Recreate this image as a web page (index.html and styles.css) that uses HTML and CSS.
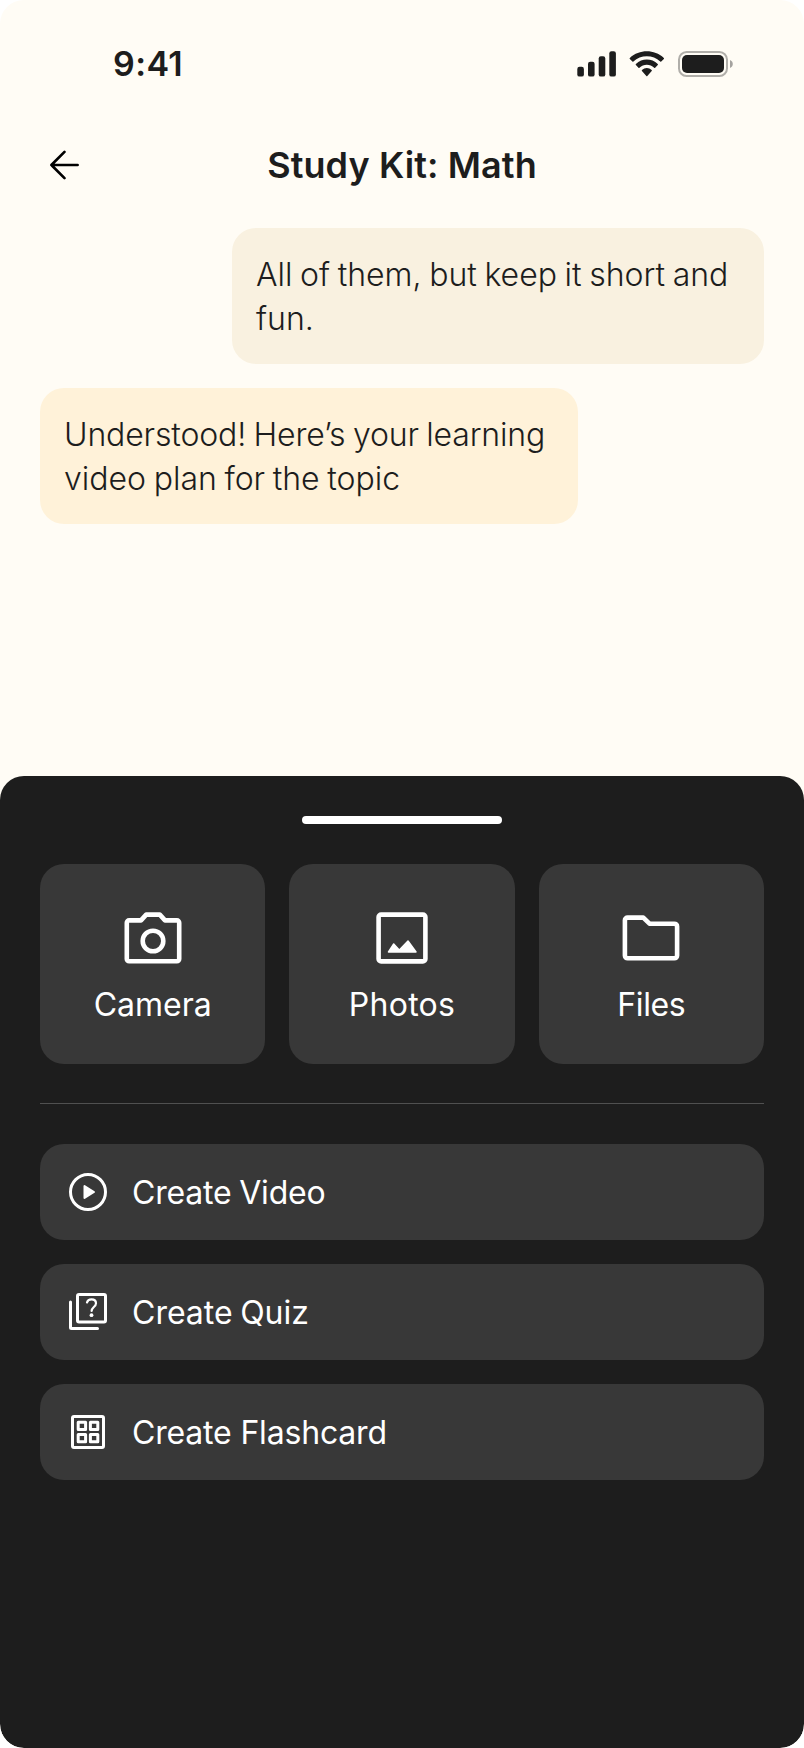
FILE: index.html
```
<!DOCTYPE html>
<html lang="en">
<head>
<meta charset="utf-8">
<title>Study Kit: Math</title>
<link rel="stylesheet" href="styles.css">
</head>
<body>
<div class="screen">
  <header class="status">
    <span class="clock">9:41</span>
    <svg class="indicators" width="158" height="28" viewBox="0 0 158 28" fill="#1d1d1d">
      <rect x="1.3" y="16.8" width="6.6" height="9.8" rx="2.2"/>
      <rect x="12" y="11.8" width="6.6" height="14.8" rx="2.2"/>
      <rect x="22.7" y="6.3" width="6.6" height="20.3" rx="2.2"/>
      <rect x="33.3" y="1.2" width="6.6" height="25.4" rx="2.2"/>
      <path transform="translate(53.6 1.2) scale(2.01 2.04)" d="M8.5713 2.46628C11.0584 2.46639 13.4504 3.38847 15.2529 5.04195C15.3887 5.1696 15.6056 5.16799 15.7393 5.03834L17.0368 3.77487C17.1045 3.70911 17.1422 3.62004 17.1417 3.52735C17.1411 3.43467 17.1023 3.34603 17.0338 3.28104C12.3028-1.09368 4.83907-1.09368.108056 3.28104C.03952 3.34598.00064 3.4346 0 3.52728C-.00062 3.61996.03705 3.70906.10469 3.77487L1.40255 5.03834C1.53615 5.16819 1.75327 5.1698 1.88893 5.04195C3.69167 3.38836 6.08395 2.46628 8.5713 2.46628ZM8.56795 6.68656C9.92527 6.68647 11.2341 7.19821 12.2403 8.12234C12.3763 8.25347 12.5907 8.25062 12.7234 8.11594L14.0106 6.79693C14.0784 6.72722 14.116 6.63302 14.1149 6.53514C14.1137 6.43677 14.0746 6.34327 14.0054 6.27555C10.9416 3.38615 6.19688 3.38615 3.13305 6.27555C3.06384 6.34327 3.02464 6.43682 3.02351 6.53518C3.02238 6.63354 3.06004 6.72722 3.12801 6.79693L4.4149 8.11594C4.54754 8.25062 4.76202 8.25347 4.89792 8.12234C5.90339 7.19882 7.21123 6.68713 8.56795 6.68656ZM11.0924 9.48011C11.0943 9.58546 11.0572 9.68703 10.9899 9.76084L8.81327 12.2156C8.74946 12.2877 8.66247 12.3283 8.5717 12.3283C8.48093 12.3283 8.39394 12.2877 8.33013 12.2156L6.15314 9.76084C6.08585 9.68697 6.04886 9.58537 6.05085 9.48002C6.05284 9.37467 6.09365 9.27491 6.16364 9.20429C7.55374 7.8904 9.58966 7.8904 10.9798 9.20429C11.0497 9.27497 11.0904 9.37476 11.0924 9.48011Z"/>
      <rect x="103" y="2" width="48" height="24" rx="7.6" fill="none" stroke="#1d1d1d" stroke-opacity=".35" stroke-width="2"/>
      <rect x="106" y="5" width="42" height="18" rx="5"/>
      <path d="M154 10v8c1.700-.7 2.800-2.200 2.800-4s-1.100-3.300-2.800-4z" fill-opacity=".4"/>
    </svg>
  </header>

  <nav class="topbar">
    <svg class="back" width="48" height="48" viewBox="0 0 48 48" fill="none" stroke="#000" stroke-width="2.7" stroke-linecap="round" stroke-linejoin="round">
      <path d="M37.600 24H11.400M24.500 10.900L11.400 24l13.100 13.100"/>
    </svg>
    <h1 class="title">Study Kit: Math</h1>
  </nav>

  <main class="chat">
    <p class="bubble sent">All of them, but keep it short and<br>fun.</p>
    <p class="bubble received"><span class="greeting">Understood! Here’s your learning</span><br>video plan for the topic</p>
  </main>

  <section class="sheet">
    <div class="handle"></div>
    <div class="tiles">
      <div class="tile">
        <svg width="72" height="72" viewBox="0 0 72 72" fill="none" stroke="#fff" stroke-width="4.600" stroke-linejoin="round">
          <path d="M12.100 18.400H24l5.200-5.800h13.600l5.200 5.800h11.900a2.300 2.300 0 0 1 2.300 2.300V57a2.300 2.300 0 0 1-2.300 2.300H12.100A2.300 2.300 0 0 1 9.800 57V20.700a2.300 2.300 0 0 1 2.300-2.300z"/>
          <circle cx="36" cy="39" r="10.300"/>
        </svg>
        <span class="label">Camera</span>
      </div>
      <div class="tile">
        <svg width="72" height="72" viewBox="0 0 72 72" fill="none" stroke="#fff" stroke-width="4.600">
          <rect x="12.600" y="12.600" width="46.800" height="46.800" rx="2.500"/>
          <path d="M22.500 50l5.200-8 5.300 5.800.6 0L42 39l8 11z" fill="#fff" stroke-width="1.500" stroke-linejoin="round"/>
        </svg>
        <span class="label photos">Photos</span>
      </div>
      <div class="tile">
        <svg width="72" height="72" viewBox="0 0 72 72" fill="none" stroke="#fff" stroke-width="4.600" stroke-linejoin="round">
          <path d="M12.600 15.600H28.300l6.200 6.100H59.400a2.700 2.700 0 0 1 2.700 2.700V53.600a2.700 2.700 0 0 1-2.700 2.700H12.600a2.700 2.700 0 0 1-2.700-2.700V18.300a2.700 2.700 0 0 1 2.700-2.700z"/>
        </svg>
        <span class="label files">Files</span>
      </div>
    </div>
    <hr class="divider">
    <div class="actions">
      <div class="action">
        <svg width="48" height="48" viewBox="0 0 48 48" fill="none" stroke="#fff" stroke-width="3">
          <circle cx="24" cy="24" r="17.500"/>
          <path d="M20.500 18v12l9.500-6z" fill="#fff" stroke-width="2" stroke-linejoin="round"/>
        </svg>
        <span class="name video">Create Video</span>
      </div>
      <div class="action">
        <svg width="48" height="48" viewBox="0 0 48 48" fill="none" stroke="#fff" stroke-width="3" stroke-linecap="round" stroke-linejoin="round">
          <rect x="13.500" y="6.500" width="28" height="27.500" rx="1.500"/>
          <path d="M6.500 14V39.500a1 1 0 0 0 1 1H33.500"/>
          <path d="M23 14.500c.5-2 2.200-3.200 4.500-3.200 2.600 0 4.500 1.600 4.500 4 0 3.600-4.400 3.900-4.400 7.700" stroke-width="2.200"/>
          <circle cx="27.500" cy="27.200" r="1.900" fill="#fff" stroke="none"/>
        </svg>
        <span class="name quiz">Create Quiz</span>
      </div>
      <div class="action">
        <svg width="48" height="48" viewBox="0 0 48 48" fill="none" stroke="#fff" stroke-width="3" stroke-linejoin="round">
          <rect x="8.500" y="8.500" width="31" height="31" rx="1.500"/>
          <path d="M14.200 14.200h7.400v7.400h-7.400zM26.400 14.200h7.400v7.400h-7.400zM14.200 26.400h7.400v7.400h-7.400zM26.400 26.400h7.400v7.400h-7.400z" stroke-width="3"/>
        </svg>
        <span class="name flashcard">Create Flashcard</span>
      </div>
    </div>
  </section>
</div>
</body>
</html>
```
FILE: styles.css
```
* { box-sizing: border-box; }
body { margin: 0; background: #fff; font-family: Inter, "Liberation Sans", sans-serif; color: #1d1d1d; }
svg { display: block; flex: none; }
.screen { width: 804px; height: 1748px; display: flex; flex-direction: column; background: #fffcf5; border-radius: 24px; overflow: hidden; }
.status { flex: none; display: flex; justify-content: space-between; align-items: center; height: 128px; padding: 0 70px 0 113px; }
.clock { font-size: 34px; font-weight: 600; line-height: 44px; letter-spacing: .4px; }
.topbar { flex: none; display: flex; align-items: center; height: 74px; padding: 0 40px; }
.title { flex: 1; margin: 0 48px 0 0; text-align: center; font-size: 36px; line-height: 48px; font-weight: 600; letter-spacing: .1px; white-space: nowrap; }
.chat { flex: none; display: flex; flex-direction: column; gap: 24px; padding: 26px 40px 0; height: 574px; }
.bubble { margin: 0; padding: 25px 24px 23px; border-radius: 24px; font-size: 32px; line-height: 44px; font-weight: 340; word-spacing: -1.4px; white-space: nowrap; }
.sent { align-self: flex-end; width: 532px; background: #f9f1e0; }
.received { align-self: flex-start; width: 538px; background: #fff2d9; }
.greeting { letter-spacing: -.15px; }
.sheet { flex: 1; display: flex; flex-direction: column; padding: 40px; background: #1d1d1d; color: #fff; border-radius: 24px; }
.handle { align-self: center; width: 200px; height: 8px; border-radius: 4px; background: #fff; }
.tiles { display: grid; grid-template-columns: repeat(3, 1fr); gap: 24px; margin-top: 40px; }
.tile { display: flex; flex-direction: column; align-items: center; height: 200px; padding-top: 38px; gap: 9px; border-radius: 24px; background: #383838; font-size: 32px; line-height: 44px; }
.photos { letter-spacing: .3px; }
.files { letter-spacing: -.4px; }
.divider { width: 100%; height: 1px; margin: 39px 0 40px; border: 0; background: #505050; }
.actions { display: flex; flex-direction: column; gap: 24px; }
.action { display: flex; align-items: center; gap: 20px; height: 96px; padding: 0 24px; border-radius: 24px; background: #383838; font-size: 32px; line-height: 44px; }
.name { padding-top: 1px; }
.video { letter-spacing: -.2px; word-spacing: -1px; }
.quiz { word-spacing: -1.5px; }
.flashcard { letter-spacing: -.18px; }
```
